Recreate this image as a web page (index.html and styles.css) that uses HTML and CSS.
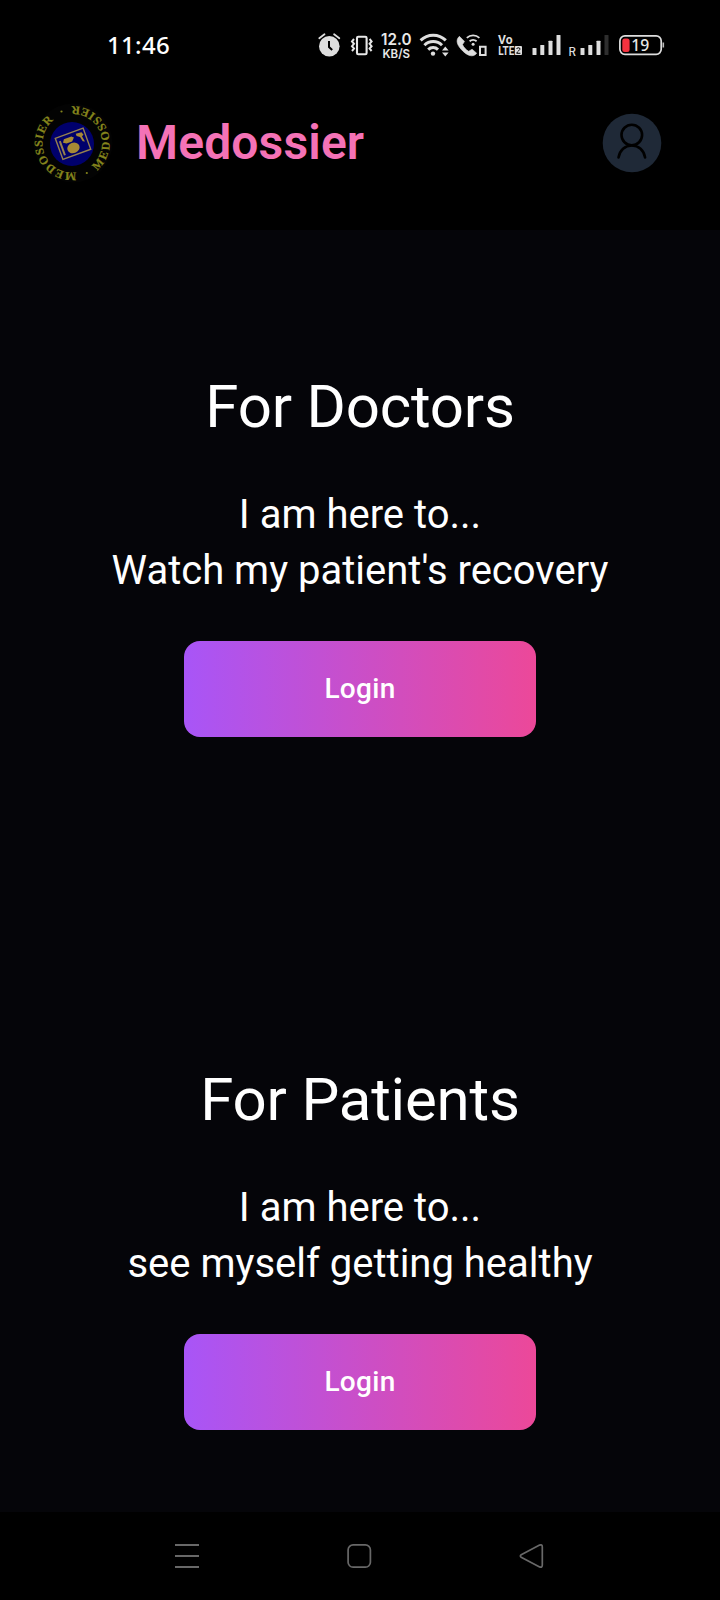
FILE: index.html
```html
<!DOCTYPE html>
<html lang="en">
<head>
<meta charset="utf-8">
<title>Medossier</title>
<link rel="stylesheet" href="styles.css">
</head>
<body>
<div class="phone">
  <div class="status">
    <span class="clock">11:46</span>
    <div class="status-icons">
      <svg width="32" height="40" viewBox="314 25 32 40">
        <circle cx="329.3" cy="46.3" r="10.3" fill="#dedede"/>
        <path d="M319.3 38.2l5.2-4M339.3 38.2l-5.2-4" stroke="#dedede" stroke-width="1.8" stroke-linecap="round"/>
        <path d="M329 41v6l3.2 3" stroke="#000" stroke-width="2" fill="none"/>
      </svg>
      <svg width="30" height="40" viewBox="346 25 30 40" fill="none" stroke="#e8e8e8">
        <rect x="357" y="36.8" width="9.6" height="17.4" rx="1.3" stroke-width="2.1"/>
        <path d="M354 39l-2 2.4 2 2.4-2 2.4 2 2.4-2 2.4M369.6 39l2 2.4-2 2.4 2 2.4-2 2.4 2 2.4" stroke-width="2"/>
      </svg>
      <svg class="net" width="40" height="40" viewBox="376 25 40 40">
        <text x="381" y="45.2" font-size="15.5" textLength="30.5" lengthAdjust="spacingAndGlyphs">12.0</text>
        <text x="382.5" y="57.8" font-size="12.3" textLength="27.5" lengthAdjust="spacingAndGlyphs">KB/S</text>
      </svg>
      <svg width="37" height="40" viewBox="416 25 37 40" fill="none" stroke="#dedede" stroke-width="3">
        <path d="M420.6 40.4a18 18 0 0 1 25.2 0M424.4 45.2a12.6 12.6 0 0 1 17.6 0M428.2 49.6a7 7 0 0 1 9.8 0"/>
        <circle cx="433" cy="53.6" r="2.2" fill="#dedede" stroke="none"/>
        <path d="M442 50.5l3.3-4 3.3 4zM442 52.6l3.3 4 3.3-4z" fill="#dedede" stroke="none"/>
      </svg>
      <svg width="40" height="40" viewBox="453 25 40 40" fill="none" stroke="#dedede">
        <path d="M459.4 36.3c-5 4.5-1 10.5 3.3 14.6 4.3 4.2 10 7.4 14 2.3l-4.6-4-3.4 2.1c-2.6-1.4-5.300-4.300-6.200-6.700l2-3.200z" fill="#dedede" stroke-width=".6" stroke-linejoin="round"/>
        <path d="M466.8 37.8a9.5 9.5 0 0 1 12.6 0M469.6 41.3a5.3 5.3 0 0 1 7 0" stroke-width="1.8"/>
        <circle cx="473.1" cy="44.3" r="1.5" fill="#dedede" stroke="none"/>
        <path d="M480 46.8h5.6v8.2h-5.6z" stroke-width="2"/>
      </svg>
      <svg class="volte" width="34" height="40" viewBox="493 25 34 40">
        <text x="498" y="44.2" font-size="12.5" textLength="14.5" lengthAdjust="spacingAndGlyphs">Vo</text>
        <text x="498.3" y="55" font-size="12.8" textLength="16" lengthAdjust="spacingAndGlyphs">LTE</text>
        <rect x="514.8" y="46" width="7.2" height="9" rx="1" fill="#dedede"/>
        <path d="M516.5 48.5q2-1.5 3.5 0c.5 1.5-3 3-3.3 4.8h3.7" fill="none" stroke="#000" stroke-width="1"/>
      </svg>
      <svg width="37" height="40" viewBox="527 25 37 40" fill="#dedede">
        <rect x="532.5" y="48" width="4" height="7" rx=".6"/><rect x="540.3" y="45" width="4" height="10" rx=".6"/>
        <rect x="548.5" y="40.7" width="4" height="14.3" rx=".6"/><rect x="556.5" y="35" width="4" height="20" rx=".6"/>
      </svg>
      <svg width="50" height="40" viewBox="564 25 50 40" fill="#dedede">
        <text class="roaming" x="568.6" y="56.2" font-size="11.5">R</text>
        <rect x="580.5" y="48" width="4" height="7" rx=".6"/><rect x="588.3" y="45" width="4" height="10" rx=".6"/>
        <rect x="596.5" y="40.7" width="4" height="14.3" rx=".6"/><rect x="604.5" y="35" width="4" height="20" rx=".6" fill="#2e2e2e"/>
      </svg>
      <svg width="54" height="40" viewBox="614 25 54 40">
        <rect x="619.9" y="35.9" width="41.3" height="18.4" rx="5" fill="none" stroke="#dedede" stroke-width="1.7"/>
        <rect x="622.3" y="38.6" width="7.3" height="13.3" rx="2.5" fill="#f5323f"/>
        <path d="M663.3 42.5v5" stroke="#bbb" stroke-width="1.6"/>
        <text class="charge" x="631.2" y="51.3" font-size="16.5" textLength="18" lengthAdjust="spacingAndGlyphs">19</text>
      </svg>
    </div>
  </div>

  <header class="header">
    <svg class="logo" width="80" height="80" viewBox="-40 -40 80 80">
      <circle r="39.5" fill="#030303"/>
      <circle cx="-1" cy="1" r="22" fill="#00006c"/>
      <g transform="translate(0 .8) rotate(-20)">
        <rect x="-14.8" y="-11.2" width="29.6" height="22.4" fill="none" stroke="#96804f" stroke-width="1.4"/>
        <ellipse cx="-1" cy="4" rx="6.3" ry="5.2" fill="#a78a35"/>
        <path d="M-7-7.5h8l2 2-3 3h-6l-3-2z" fill="#a78a35"/>
        <path d="M6-8.5l6 .5 1 3-2 1 1 6-2-1-1-5-3-2z" fill="#a78a35"/>
        <path d="M-11.5-7v15" stroke="#96804f" stroke-width="2"/>
      </g>
      <path id="ring-left" d="M3.200 29A29.200 29.200 0 1 1 -3 -29" fill="none"/>
      <path id="ring-right" d="M24 27.7A36.7 36.7 0 0 0 -5 -36.4" fill="none"/>
      <text class="ring"><textPath href="#ring-left" textLength="76.5">MEDOSSIER</textPath></text>
      <text class="ring"><textPath href="#ring-right" textLength="90">MEDOSSIER</textPath></text>
      <circle cx="-11.500" cy="-31.500" r="1.1" fill="#85851c"/><circle cx="13.8" cy="30" r="1.1" fill="#85851c"/>
    </svg>
    <h1 class="brand">Medossier</h1>
    <svg class="avatar" width="60" height="60" viewBox="0 0 60 60">
      <circle cx="30" cy="30" r="29.3" fill="#1f2937"/>
      <g fill="none" stroke="#000" stroke-width="2.6" stroke-linecap="round">
        <circle cx="29.8" cy="22" r="10.3"/>
        <path d="M16.5 44.5c1.2-7.5 6.5-12 13.3-12s12.1 4.5 13.3 12"/>
      </g>
    </svg>
  </header>

  <main class="main">
    <section class="card">
      <h2 class="title">For Doctors</h2>
      <p class="text">I am here to...<br>Watch my patient's recovery</p>
      <button class="login">Login</button>
    </section>
    <section class="card">
      <h2 class="title">For Patients</h2>
      <p class="text">I am here to...<br>see myself getting healthy</p>
      <button class="login">Login</button>
    </section>
  </main>

  <nav class="navbar">
    <svg width="26" height="26" viewBox="0 0 26 26" fill="none" stroke="#686868" stroke-width="2"><path d="M1 2h24M1 13h24M1 24h24"/></svg>
    <svg width="26" height="26" viewBox="0 0 26 26" fill="none" stroke="#686868" stroke-width="1.7"><rect x="1.1" y="1.9" width="22.3" height="22.3" rx="5"/></svg>
    <svg width="26" height="26" viewBox="0 0 26 26" fill="none" stroke="#686868" stroke-width="1.7"><path d="M2.200 11.700L20.600 2.100q2.700-1 2.700 1.800v18.200q0 2.800-2.700 1.800L2.200 14.300q-1.700-1.300 0-2.600z"/></svg>
  </nav>
</div>
</body>
</html>
```
FILE: styles.css
```css
* { box-sizing: border-box; margin: 0; padding: 0; }
body { background: #000; color: #fff; font-family: Roboto, "Liberation Sans", sans-serif; }
svg { display: block; flex: none; }
.phone { width: 720px; height: 1600px; display: flex; flex-direction: column; overflow: hidden; }

.status { height: 90px; padding: 25px 52px 25px 107px; display: flex; justify-content: space-between; align-items: center; }
.clock { font: 500 24px/40px "Noto Sans", sans-serif; letter-spacing: 0.3px; }
.status-icons { display: flex; }
.net text { fill: #e8e8e8; font-family: Inter, sans-serif; font-weight: 600; }
.volte text { fill: #dedede; font-family: Roboto, sans-serif; font-weight: 700; }
.roaming { font-family: Inter, sans-serif; font-weight: 500; }
.charge { fill: #e8e8e8; font-family: "Noto Sans", sans-serif; font-weight: 500; }

.header { height: 140px; padding: 13px 58px 0 33px; display: flex; align-items: flex-start; }
.logo { overflow: visible; }
.ring { fill: #85851c; stroke: #85851c; stroke-width: 0.2px; font-family: "Liberation Serif", serif; font-size: 11.8px; font-weight: 700; }
.brand { margin-left: 23px; color: #f472b6; font-size: 48px; line-height: 80px; font-weight: 600; letter-spacing: 0.15px; }
.avatar { margin: 10px 0 0 auto; }

.main { height: 1282px; padding-top: 137px; background: #050509; }
.card { height: 693px; display: flex; flex-direction: column; align-items: center; text-align: center; }
.title { font-size: 60px; line-height: 80px; font-weight: 400; letter-spacing: -0.2px; }
.text { margin-top: 40px; font-size: 40px; line-height: 56px; }
.login { width: 352px; height: 96px; margin-top: 42px; border: 0; border-radius: 16px; background: linear-gradient(90deg, #a855f7, #ec4899); color: #fff; font: 500 28px/40px Roboto, sans-serif; letter-spacing: 0.3px; }

.navbar { height: 88px; padding: 0 175px 0 174px; display: flex; justify-content: space-between; align-items: center; }
```
